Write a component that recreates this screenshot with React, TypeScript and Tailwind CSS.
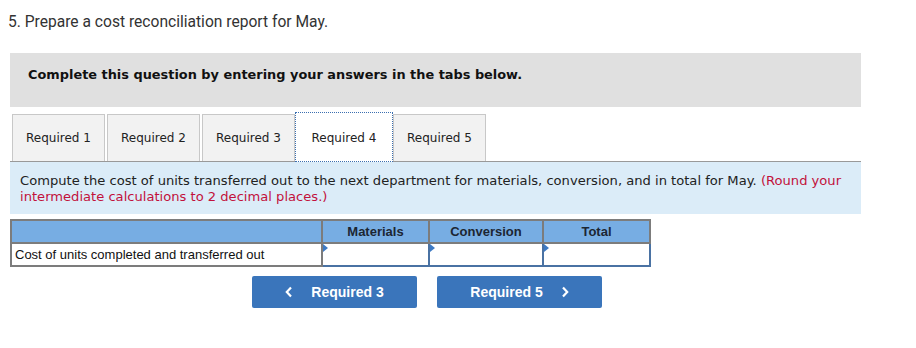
const verdana = "font-['DejaVu_Sans',Verdana,sans-serif]";
const arial = "font-['Liberation_Sans',Arial,sans-serif]";

function Tab({ label, active = false, className = "" }: { label: string; active?: boolean; className?: string }) {
  if (active) {
    return (
      <div className={`relative z-10 -mb-[1px] flex h-[50px] w-[98px] items-center justify-center border border-dotted border-[#3b6fb0] bg-white pt-[1px] text-[12px] text-[#222] ${className}`}>
        {label}
      </div>
    );
  }
  return (
    <div className={`flex h-[47px] w-[93px] items-center justify-center border border-b-0 border-[#c8c8c8] bg-[#f2f2f2] text-[12px] text-[#222] ${className}`}>
      {label}
    </div>
  );
}

function InputCell() {
  return (
    <td className="relative border-2 border-[#4a72a3] bg-white p-0">
      <span className="absolute left-0 top-0 h-0 w-0 border-y-[4px] border-l-[5px] border-y-transparent border-l-[#3d7ac4]" />
    </td>
  );
}

export default function App() {
  return (
    <div className="h-[348px] w-[916px] overflow-hidden bg-white">
      <p className="pl-[8px] pt-[12px] font-['Roboto',sans-serif] text-[15.6px] leading-[20px] text-[#333]">
        5. Prepare a cost reconciliation report for May.
      </p>

      <div className={`ml-[10px] mt-[21px] h-[54px] w-[851px] bg-[#e0e0e0] pl-[18px] pt-[14px] text-[12.9px] font-bold leading-[16px] text-[#111] ${verdana}`}>
        Complete this question by entering your answers in the tabs below.
      </div>

      <div className={`relative z-10 ml-[12px] mt-[5px] flex items-end ${verdana}`}>
        <Tab label="Required 1" />
        <Tab label="Required 2" className="ml-[2px]" />
        <Tab label="Required 3" className="ml-[2px]" />
        <Tab label="Required 4" active />
        <Tab label="Required 5" />
      </div>

      <div className={`ml-[10px] h-[53px] w-[851px] border-t border-[#999] bg-[#dbecf8] px-[10px] pt-[11px] text-[13.1px] leading-[16px] text-[#222] ${verdana}`}>
        Compute the cost of units transferred out to the next department for materials, conversion, and in total for May.{" "}
        <span className="text-[#c2113c]">(Round your intermediate calculations to 2 decimal places.)</span>
      </div>

      <table className={`ml-[10px] mt-[5px] w-[641px] border-collapse text-[13px] ${arial}`}>
        <thead>
          <tr className="h-[23px] bg-[#77ade3] text-[#1c2633]">
            <th className="w-[311px] border-2 border-[#7c7c7c]" />
            <th className="w-[107px] border-2 border-[#7c7c7c] font-bold">Materials</th>
            <th className="w-[114px] border-2 border-[#7c7c7c] font-bold">Conversion</th>
            <th className="border-2 border-[#7c7c7c] font-bold">Total</th>
          </tr>
        </thead>
        <tbody>
          <tr className="h-[23px]">
            <td className="border-2 border-[#7c7c7c] px-[3px] leading-[16px] text-[#111]">Cost of units completed and transferred out</td>
            <InputCell />
            <InputCell />
            <InputCell />
          </tr>
        </tbody>
      </table>

      <div className={`ml-[252px] mt-[9px] flex gap-[20px] text-[14px] font-bold text-white ${arial}`}>
        <button className="flex h-[32px] w-[165px] items-center justify-center gap-[18px] rounded-[2px] bg-[#3a75bb]">
          <svg width="8" height="12" viewBox="0 0 8 12" fill="none" stroke="white" strokeWidth="2.2">
            <path d="M6 1.5 1.8 6 6 10.5" />
          </svg>
          <span>Required 3</span>
        </button>
        <button className="flex h-[32px] w-[165px] items-center justify-center gap-[18px] rounded-[2px] bg-[#3a75bb]">
          <span>Required 5</span>
          <svg width="8" height="12" viewBox="0 0 8 12" fill="none" stroke="white" strokeWidth="2.2">
            <path d="M2 1.5 6.2 6 2 10.5" />
          </svg>
        </button>
      </div>
    </div>
  );
}
